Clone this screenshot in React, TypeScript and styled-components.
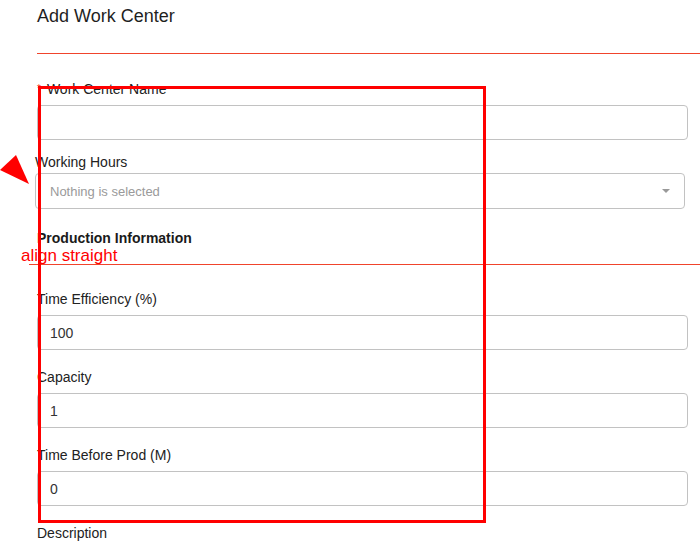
import React from 'react';
import styled, { createGlobalStyle } from 'styled-components';

const GlobalStyle = createGlobalStyle`
	html, body {
		margin: 0;
		padding: 0;
		background: #ffffff;
	}
	body {
		font-family: 'Liberation Sans', Arial, sans-serif;
		color: #222222;
	}
`;

interface Field {
	label: string;
	value: string;
	gap: number;
}

// fields under "Production Information"
const productionFields: Field[] = [
	{ label: 'Time Efficiency (%)', value: '100', gap: 24 },
	{ label: 'Capacity', value: '1', gap: 17 },
	{ label: 'Time Before Prod (M)', value: '0', gap: 17 },
];

export default function App() {
	return (
		<>
			<GlobalStyle />
			<Page>
				<Header>Add Work Center</Header>
				<Divider />

				<Form>
					<Group $gap={25}>
						<Label>
							<Required>*</Required>Work Center Name
						</Label>
						<Input type="text" defaultValue="" />
					</Group>

					<Group $gap={12} $shift={-2}>
						<Label $tight>Working Hours</Label>
						<Select>
							<Placeholder>Nothing is selected</Placeholder>
							<Caret />
						</Select>
					</Group>

					<SectionTitle>Production Information</SectionTitle>

					{productionFields.map((field) => (
						<Group key={field.label} $gap={field.gap}>
							<Label>{field.label}</Label>
							<Input type="text" defaultValue={field.value} />
						</Group>
					))}

					<Group $gap={17}>
						<Label>Description</Label>
					</Group>
				</Form>

				{/* review annotations drawn over the form */}
				<Highlight />
				<Pointer width="30" height="32" viewBox="0 0 30 32">
					<polygon points="16,0 0,15 29,29" fill="#ff0000" />
				</Pointer>
				<Note>align straight</Note>
			</Page>
		</>
	);
}

const Page = styled.div`
	position: relative;
	width: 700px;
	height: 549px;
	overflow: hidden;
	padding-left: 37px;
	box-sizing: border-box;
`;

const Header = styled.h1`
	margin: 0;
	padding: 6px 0 26px;
	font-size: 18px;
	font-weight: 400;
	line-height: 21px;
	color: #1f1f1f;
`;

const Divider = styled.div`
	height: 1px;
	background: #f0442c;
`;

const Form = styled.div`
	display: flex;
	flex-direction: column;
	padding-right: 12px;
`;

const Group = styled.div<{ $gap: number; $shift?: number }>`
	display: flex;
	flex-direction: column;
	margin-top: ${({ $gap }) => $gap}px;
	margin-left: ${({ $shift }) => $shift ?? 0}px;
	margin-right: ${({ $shift }) => ($shift ? 3 : 0)}px;
`;

const Label = styled.label<{ $tight?: boolean }>`
	display: block;
	font-size: 14px;
	line-height: 20px;
	color: #222222;
	margin-bottom: ${({ $tight }) => ($tight ? 1 : 6)}px;
`;

const Required = styled.span`
	color: #f0442c;
	font-size: 10px;
	margin-right: 6px;
	vertical-align: top;
`;

const Input = styled.input`
	box-sizing: border-box;
	width: 100%;
	height: 35px;
	padding: 0 12px;
	border: 1px solid #c2c2c2;
	border-radius: 4px;
	font-family: 'Liberation Sans', Arial, sans-serif;
	font-size: 14px;
	color: #333333;
	background: #ffffff;
	outline: none;
`;

const Select = styled.div`
	box-sizing: border-box;
	height: 36px;
	display: flex;
	align-items: center;
	justify-content: space-between;
	padding: 0 14px;
	border: 1px solid #c2c2c2;
	border-radius: 4px;
	background: #ffffff;
`;

const Placeholder = styled.span`
	font-size: 13px;
	color: #9a9a9a;
`;

const Caret = styled.span`
	width: 0;
	height: 0;
	border-left: 4px solid transparent;
	border-right: 4px solid transparent;
	border-top: 4px solid #999999;
`;

const SectionTitle = styled.div`
	margin: 19px -12px 0 -8px;
	padding: 0 0 16px 8px;
	font-size: 14px;
	font-weight: 700;
	line-height: 20px;
	color: #1a1a1a;
	border-bottom: 1px solid #f0442c;
`;

const Highlight = styled.div`
	position: absolute;
	left: 38px;
	top: 86px;
	width: 448px;
	height: 437px;
	box-sizing: border-box;
	border: 3px solid #ff0000;
	pointer-events: none;
`;

const Pointer = styled.svg`
	position: absolute;
	left: 0;
	top: 155px;
`;

const Note = styled.div`
	position: absolute;
	left: 21px;
	top: 246px;
	font-size: 17px;
	line-height: 20px;
	color: #ff0000;
`;
